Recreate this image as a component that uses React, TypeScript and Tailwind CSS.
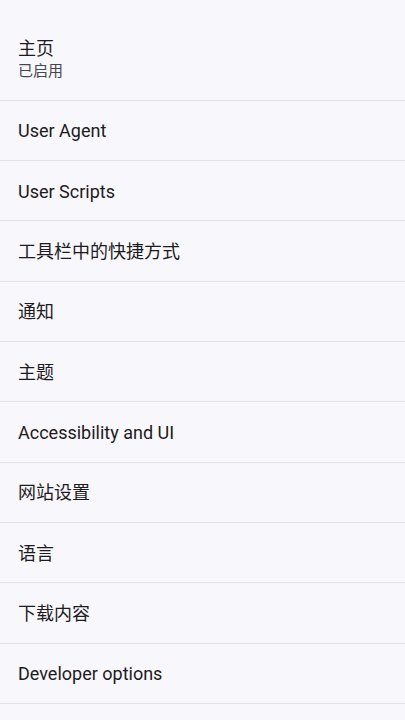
const rows = [
  'User Agent',
  'User Scripts',
  '工具栏中的快捷方式',
  '通知',
  '主题',
  'Accessibility and UI',
  '网站设置',
  '语言',
  '下载内容',
  'Developer options',
];

export default function App() {
  return (
    <div
      className="min-h-[720px] w-full overflow-hidden bg-[#f8f7fc] text-[#1d1b20]"
      style={{ fontFamily: 'Roboto, "Noto Sans CJK SC", sans-serif' }}
    >
      <div className="flex h-[100.5px] flex-col justify-center border-b border-[#e5e3ea] pl-[18px] pt-[18px]">
        <div className="text-[18px] leading-[24px]">主页</div>
        <div className="text-[15px] leading-[20px] text-[#47464f]">已启用</div>
      </div>
      {rows.map((r) => (
        <div
          key={r}
          className="flex h-[60.35px] items-center border-b border-[#e5e3ea] pl-[18px] pt-[1px] text-[18px]"
        >
          {r}
        </div>
      ))}
    </div>
  );
}
